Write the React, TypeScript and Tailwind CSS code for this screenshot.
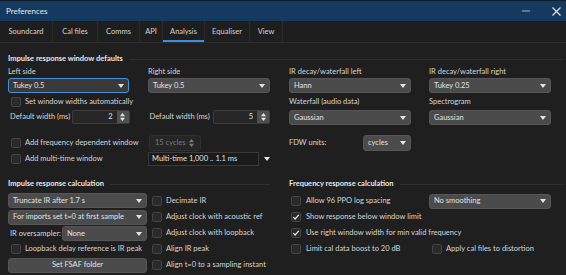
import React from "react";

function Arrow({ color = "#e4e4e4" }: { color?: string }) {
  return (
    <svg width="6" height="4" viewBox="0 0 6 4" className="shrink-0">
      <path d="M0 0 L6 0 L3 4 Z" fill={color} />
    </svg>
  );
}

function SpinArrows({ color = "#e4e4e4" }: { color?: string }) {
  return (
    <svg width="5" height="8" viewBox="0 0 5 8" className="shrink-0">
      <path d="M0 3.2 L5 3.2 L2.5 0 Z" fill={color} />
      <path d="M0 4.8 L5 4.8 L2.5 8 Z" fill={color} />
    </svg>
  );
}

function Dropdown({
  text,
  className = "",
  focused = false,
}: {
  text: string;
  className?: string;
  focused?: boolean;
}) {
  return (
    <div
      className={
        "flex items-center justify-between rounded-[3px] pl-[4px] pr-[4px] border " +
        (focused
          ? "bg-[#3a3a3a] border-[#4a90d9] "
          : "bg-[#4b4b4b] border-[#555555] ") +
        className
      }
    >
      <span className="text-[#e2e2e2] whitespace-nowrap">{text}</span>
      <Arrow />
    </div>
  );
}

function Check({ checked = false }: { checked?: boolean }) {
  return (
    <div className="w-[10px] h-[10px] shrink-0 rounded-[2px] bg-[#2a2a2a] border border-[#434343] flex items-center justify-center">
      {checked && (
        <svg width="8" height="8" viewBox="0 0 8 8">
          <polyline
            points="1.3,4.2 3.1,6 6.8,1.8"
            fill="none"
            stroke="#f0f0f0"
            strokeWidth="1.2"
          />
        </svg>
      )}
    </div>
  );
}

function CheckRow({
  text,
  checked = false,
  gap = "gap-[4px]",
  className = "",
}: {
  text: string;
  checked?: boolean;
  gap?: string;
  className?: string;
}) {
  return (
    <div className={"flex items-center " + gap + " " + className}>
      <Check checked={checked} />
      <span className="whitespace-nowrap">{text}</span>
    </div>
  );
}

function Spin({ value, className = "" }: { value: string; className?: string }) {
  return (
    <div
      className={
        "flex h-[14px] rounded-[2px] border border-[#3c3c3c] bg-[#262626] overflow-hidden " +
        className
      }
    >
      <div className="flex-1 flex items-center justify-end pr-[4px] text-[#e2e2e2]">
        {value}
      </div>
      <div className="w-[12px] bg-[#4f4f4f] flex items-center justify-center">
        <SpinArrows />
      </div>
    </div>
  );
}

const tabs = [
  { name: "Soundcard", w: "w-[53px]" },
  { name: "Cal files", w: "w-[45px]" },
  { name: "Comms", w: "w-[42px]" },
  { name: "API", w: "w-[23px]" },
  { name: "Analysis", w: "w-[42px]", active: true },
  { name: "Equaliser", w: "w-[45px]" },
  { name: "View", w: "w-[33px]" },
];

export default function App() {
  return (
    <div className="w-[566px] h-[275px] bg-[#1f1f1f] text-[#d6d6d6] text-[7.5px] leading-none font-[family-name:Lato,sans-serif] overflow-hidden flex flex-col">
      {/* Title bar */}
      <div className="h-[21px] shrink-0 bg-[#143a5f] border-t border-[#101c2a] flex items-center justify-between pl-[6px] pr-[5px]">
        <span className="text-[8px] text-[#e6e6e6]">Preferences</span>
        <div className="flex items-center gap-[22px]">
          <svg width="8" height="2" viewBox="0 0 8 2">
            <rect x="0" y="0.5" width="8" height="1" fill="#9fb3c8" />
          </svg>
          <svg width="9" height="9" viewBox="0 0 9 9">
            <path d="M0.5 0.5 L8.5 8.5 M8.5 0.5 L0.5 8.5" stroke="#e6e6e6" strokeWidth="1.1" />
          </svg>
        </div>
      </div>

      {/* Tabs */}
      <div className="h-[22px] shrink-0 flex border-b border-[#2d2d2d] bg-[#1e1e1e]">
        {tabs.map((t) => (
          <div
            key={t.name}
            className={
              "relative flex items-center justify-center border-r border-[#2b2b2b] text-[7.5px] text-[#d4d4d4] " +
              t.w
            }
          >
            {t.name}
            {t.active && (
              <div className="absolute left-0 right-0 bottom-0 h-[2px] bg-[#3b8fe0]" />
            )}
          </div>
        ))}
      </div>

      {/* Content */}
      <div className="flex-1 pl-[8px] pr-[3px] pt-[10px]">
        {/* Section 1 header */}
        <div className="flex items-center h-[12px]">
          <span className="font-bold text-[#e8e8e8] whitespace-nowrap">
            Impulse response window defaults
          </span>
          <div className="flex-1 ml-[6px] h-px bg-[#303030]" />
        </div>

        <div className="flex">
          {/* Left block */}
          <div className="w-[262px] flex flex-col">
            <div className="flex gap-[19px] h-[13px] items-center">
              <div className="w-[121px]">Left side</div>
              <div className="w-[122px]">Right side</div>
            </div>
            <div className="flex gap-[19px]">
              <Dropdown text="Tukey 0.5" focused className="w-[121px] h-[15px]" />
              <Dropdown text="Tukey 0.5" className="w-[122px] h-[15px]" />
            </div>
            <div className="h-[17px] flex items-center pl-[3px]">
              <CheckRow text="Set window widths automatically" />
            </div>
            <div className="flex gap-[19px] h-[14px] items-center">
              <div className="w-[122px] flex items-center justify-between">
                <span className="pl-[2px]">Default width (ms)</span>
                <Spin value="2" className="w-[58px]" />
              </div>
              <div className="w-[122px] flex items-center justify-between">
                <span className="pl-[1px]">Default width (ms)</span>
                <Spin value="5" className="w-[57px]" />
              </div>
            </div>
            <div className="flex gap-[19px] h-[16px] items-center mt-[11px]">
              <div className="w-[121px] pl-[3px]">
                <CheckRow text="Add frequency dependent window" />
              </div>
              <div className="w-[122px] pl-[1px]">
                <div className="w-[52px] h-[16px] rounded-[3px] bg-[#262626] border border-[#2f2f2f] flex items-center justify-between pl-[5px] pr-[6px] text-[#7a7a7a]">
                  <span>15 cycles</span>
                  <SpinArrows color="#7a7a7a" />
                </div>
              </div>
            </div>
            <div className="flex gap-[19px] h-[14px] items-center mt-[1px]">
              <div className="w-[121px] pl-[3px]">
                <CheckRow text="Add multi-time window" />
              </div>
              <div className="w-[122px] flex items-center gap-[5px]">
                <div className="w-[111px] h-[14px] bg-[#1b1b1b] border border-[#3a3a3a] flex items-center pl-[3px] text-[#e2e2e2] whitespace-nowrap">
                  Multi-time 1,000 .. 1.1 ms
                </div>
                <Arrow />
              </div>
            </div>
          </div>

          {/* Right block */}
          <div className="ml-[19px] w-[262px] flex flex-col">
            <div className="flex gap-[18px] h-[13px] items-center">
              <div className="w-[122px]">IR decay/waterfall left</div>
              <div className="w-[122px]">IR decay/waterfall right</div>
            </div>
            <div className="flex gap-[18px]">
              <Dropdown text="Hann" className="w-[122px] h-[15px]" />
              <Dropdown text="Tukey 0.25" className="w-[122px] h-[15px]" />
            </div>
            <div className="flex gap-[18px] h-[17px] items-center">
              <div className="w-[122px]">Waterfall (audio data)</div>
              <div className="w-[122px]">Spectrogram</div>
            </div>
            <div className="flex gap-[18px]">
              <Dropdown text="Gaussian" className="w-[122px] h-[15px]" />
              <Dropdown text="Gaussian" className="w-[122px] h-[15px]" />
            </div>
            <div className="flex h-[16px] items-center mt-[10px] w-[122px] justify-between">
              <span>FDW units:</span>
              <Dropdown text="cycles" className="w-[48px] h-[16px]" />
            </div>
          </div>
        </div>

        {/* Section 2 */}
        <div className="flex mt-[11px]">
          {/* Left calc */}
          <div className="w-[262px] flex flex-col">
            <div className="flex items-center h-[14px]">
              <span className="font-bold text-[#e8e8e8] whitespace-nowrap">
                Impulse response calculation
              </span>
              <div className="flex-1 ml-[6px] h-px bg-[#303030]" />
            </div>
            <div className="flex mt-[2px]">
              <div className="w-[139px] flex flex-col">
                <div className="h-[16px]">
                  <Dropdown text="Truncate IR after 1.7 s" className="w-[139px] h-[15px]" />
                </div>
                <div className="h-[16px] flex items-center">
                  <Dropdown text="For imports set t=0 at first sample" className="w-[139px] h-[15px]" />
                </div>
                <div className="h-[16px] flex items-center justify-between pt-[1px]">
                  <span className="pl-[2px] whitespace-nowrap">IR oversampler:</span>
                  <Dropdown text="None" className="w-[85px] h-[15px]" />
                </div>
                <div className="h-[16px] flex items-center pl-[3px]">
                  <CheckRow text="Loopback delay reference is IR peak" />
                </div>
                <div className="h-[16px] flex items-center">
                  <div className="w-[139px] h-[15px] rounded-[3px] bg-[#4b4b4b] border border-[#555555] flex items-center justify-center text-[#e2e2e2]">
                    Set FSAF folder
                  </div>
                </div>
              </div>
              <div className="ml-[5px] flex flex-col">
                <div className="h-[16px] flex items-center">
                  <CheckRow text="Decimate IR" />
                </div>
                <div className="h-[16px] flex items-center">
                  <CheckRow text="Adjust clock with acoustic ref" />
                </div>
                <div className="h-[16px] flex items-center">
                  <CheckRow text="Adjust clock with loopback" />
                </div>
                <div className="h-[16px] flex items-center">
                  <CheckRow text="Align IR peak" />
                </div>
                <div className="h-[16px] flex items-center">
                  <CheckRow text="Align t=0 to a sampling instant" />
                </div>
              </div>
            </div>
          </div>

          {/* Right calc */}
          <div className="ml-[19px] flex-1 flex flex-col">
            <div className="flex items-center h-[14px]">
              <span className="font-bold text-[#e8e8e8] whitespace-nowrap">
                Frequency response calculation
              </span>
              <div className="flex-1 ml-[6px] h-px bg-[#303030]" />
            </div>
            <div className="flex flex-col mt-[2px]">
              <div className="h-[16px] flex items-center">
                <div className="w-[140px] pl-[2px]">
                  <CheckRow text="Allow 96 PPO log spacing" gap="gap-[5px]" />
                </div>
                <Dropdown text="No smoothing" className="w-[122px] h-[15px]" />
              </div>
              <div className="h-[16px] flex items-center pl-[2px]">
                <CheckRow text="Show response below window limit" checked gap="gap-[5px]" />
              </div>
              <div className="h-[16px] flex items-center pl-[2px]">
                <CheckRow text="Use right window width for min valid frequency" checked gap="gap-[5px]" />
              </div>
              <div className="h-[16px] flex items-center">
                <div className="w-[143px] pl-[2px]">
                  <CheckRow text="Limit cal data boost to 20 dB" gap="gap-[5px]" />
                </div>
                <CheckRow text="Apply cal files to distortion" gap="gap-[4px]" />
              </div>
            </div>
          </div>
        </div>
      </div>
    </div>
  );
}
